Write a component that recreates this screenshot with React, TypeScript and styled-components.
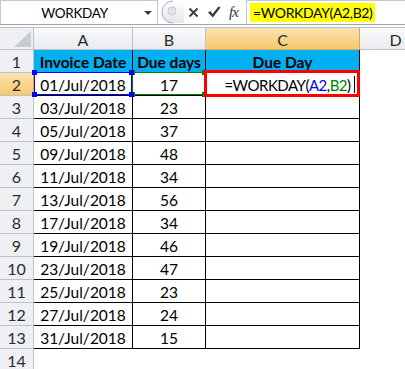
import styled, { createGlobalStyle } from 'styled-components';

const COLOR = {
  TEXT: '#000000',
  HEAD_TEXT: '#2b2b2b',
  HEAD_BG: '#eef0f3',
  HEAD_BORDER: '#bcc2ca',
  HEAD_ACTIVE_TOP: '#fbe3b0',
  HEAD_ACTIVE_BOTTOM: '#f6c86f',
  HEAD_ACTIVE_BORDER: '#e2a446',
  TABLE_BORDER: '#000000',
  TITLE_FILL: '#00b0f0',
  RED: '#ff0000',
  REF_BLUE: '#0000ff',
  REF_GREEN: '#008000',
  HIGHLIGHT: '#ffff00',
  BAR_BORDER: '#c3c8ce',
};

const FONT = `Lato, 'Liberation Sans', sans-serif`;

const GlobalStyle = createGlobalStyle`
  html, body {
    margin: 0;
    padding: 0;
    background: #fff;
  }
  body {
    font-family: ${FONT};
    color: ${COLOR.TEXT};
    overflow: hidden;
  }
`;

const Screen = styled.div`
  width: 405px;
  height: 369px;
  overflow: hidden;
  background: #fff;
`;

/* formula bar */

const FormulaBar = styled.div`
  display: flex;
  align-items: stretch;
  height: 25px;
  box-sizing: border-box;
  border-bottom: 1px solid #9ea4ac;
`;

const NameBox = styled.div`
  display: flex;
  align-items: center;
  width: 158px;
  box-sizing: border-box;
  border: 1px solid ${COLOR.BAR_BORDER};
  border-bottom: none;
`;

const NameText = styled.span`
  flex: 1;
  padding-left: 4px;
  text-align: center;
  font-size: 13.5px;
  letter-spacing: -0.3px;
`;

const DropArrow = styled.span`
  width: 0;
  height: 0;
  margin-right: 5px;
  border-left: 4px solid transparent;
  border-right: 4px solid transparent;
  border-top: 4px solid #3c3c3c;
`;

const BarTools = styled.div`
  display: flex;
  align-items: center;
  width: 88px;
`;

const ToolIcon = styled.svg<{ $gap: number }>`
  flex: none;
  margin-left: ${({ $gap }) => `${$gap}px`};
`;

const FxLabel = styled.span`
  margin-left: 8px;
  font-family: 'Liberation Serif', serif;
  font-style: italic;
  font-size: 15px;
  color: #333;
  letter-spacing: -1px;
`;

const FormulaInput = styled.div`
  flex: 1;
  display: flex;
  align-items: center;
  padding-left: 3px;
  border-left: 1px solid ${COLOR.BAR_BORDER};
  border-top: 1px solid ${COLOR.BAR_BORDER};
`;

const Highlight = styled.span`
  background: ${COLOR.HIGHLIGHT};
  padding: 1px 2px 1px 3px;
  font-size: 14px;
  letter-spacing: -0.35px;
  line-height: 17px;
`;

const BarGap = styled.div`
  height: 2px;
`;

/* sheet */

const Sheet = styled.div`
  display: grid;
  grid-template-columns: 34px 99px 73px 154px 72px;
  grid-auto-rows: 23px;
`;

const HeadBase = styled.div`
  box-sizing: border-box;
  display: flex;
  align-items: center;
  justify-content: center;
  font-size: 16px;
  color: ${COLOR.HEAD_TEXT};
`;

const Corner = styled(HeadBase)`
  align-items: flex-end;
  justify-content: flex-end;
  padding: 0 2px 2px 0;
  background: ${COLOR.HEAD_BG};
  border-top: 1px solid ${COLOR.HEAD_BORDER};
  border-right: 1px solid ${COLOR.HEAD_BORDER};
  border-bottom: 1px solid ${COLOR.HEAD_BORDER};
`;

const ColHead = styled(HeadBase)<{ $active?: boolean }>`
  padding-top: 1px;
  border-top: 1px solid ${COLOR.HEAD_BORDER};
  border-right: 1px solid
    ${({ $active }) => ($active ? COLOR.HEAD_ACTIVE_BORDER : COLOR.HEAD_BORDER)};
  border-bottom: 1px solid
    ${({ $active }) => ($active ? COLOR.HEAD_ACTIVE_BORDER : COLOR.HEAD_BORDER)};
  background: ${({ $active }) =>
    $active
      ? `linear-gradient(${COLOR.HEAD_ACTIVE_TOP}, ${COLOR.HEAD_ACTIVE_BOTTOM})`
      : 'linear-gradient(#f8f9fa, #e9ebee)'};
`;

const RowHead = styled(HeadBase)<{ $active?: boolean }>`
  border-right: 1px solid
    ${({ $active }) => ($active ? COLOR.HEAD_ACTIVE_BORDER : COLOR.HEAD_BORDER)};
  border-bottom: 1px solid ${COLOR.HEAD_BORDER};
  background: ${({ $active }) =>
    $active
      ? `linear-gradient(${COLOR.HEAD_ACTIVE_TOP}, ${COLOR.HEAD_ACTIVE_BOTTOM})`
      : COLOR.HEAD_BG};
`;

const DataCell = styled.div`
  position: relative;
  box-sizing: border-box;
  display: flex;
  align-items: center;
  justify-content: center;
  padding-top: 1px;
  font-size: 15.5px;
  white-space: nowrap;
  border-right: 1px solid ${COLOR.TABLE_BORDER};
  border-bottom: 1px solid ${COLOR.TABLE_BORDER};
`;

const TitleCell = styled(DataCell)`
  background: ${COLOR.TITLE_FILL};
  font-weight: 700;
`;

const BlankCell = styled.div``;

const RangeFrame = styled.span<{ $color: string; $left: number; $layer: number }>`
  position: absolute;
  top: -1px;
  left: ${({ $left }) => `${$left}px`};
  right: 0;
  bottom: 0;
  border: 1px solid ${({ $color }) => $color};
  z-index: ${({ $layer }) => $layer};
`;

const Handle = styled.span<{ $color: string; $x: 'left' | 'right'; $y: 'top' | 'bottom' }>`
  position: absolute;
  width: 5px;
  height: 5px;
  background: ${({ $color }) => $color};
  ${({ $x }) => $x}: -3px;
  ${({ $y }) => $y}: -3px;
`;

const RedFrame = styled.span`
  position: absolute;
  top: -3px;
  left: -2px;
  right: -1px;
  bottom: -2px;
  border: 3px solid ${COLOR.RED};
  z-index: 3;
`;

const EditText = styled.span`
  display: flex;
  align-items: center;
  padding-left: 14px;
  font-size: 15px;
  letter-spacing: -0.5px;
`;

const Ref = styled.span<{ $color: string }>`
  color: ${({ $color }) => $color};
`;

const Caret = styled.span`
  width: 1px;
  height: 17px;
  margin-left: 3px;
  background: #000;
`;

const rows: [string, string][] = [
  ['01/Jul/2018', '17'],
  ['03/Jul/2018', '23'],
  ['05/Jul/2018', '37'],
  ['09/Jul/2018', '48'],
  ['11/Jul/2018', '34'],
  ['13/Jul/2018', '56'],
  ['17/Jul/2018', '34'],
  ['19/Jul/2018', '46'],
  ['23/Jul/2018', '47'],
  ['25/Jul/2018', '23'],
  ['27/Jul/2018', '24'],
  ['31/Jul/2018', '15'],
];

const Frame = ({ color, left, layer }: { color: string; left: number; layer: number }) => (
  <RangeFrame $color={color} $left={left} $layer={layer}>
    <Handle $color={color} $x="left" $y="top" />
    <Handle $color={color} $x="right" $y="top" />
    <Handle $color={color} $x="left" $y="bottom" />
    <Handle $color={color} $x="right" $y="bottom" />
  </RangeFrame>
);

const FormulaBarRow = () => (
  <FormulaBar>
    <NameBox>
      <NameText>WORKDAY</NameText>
      <DropArrow />
    </NameBox>
    <BarTools>
      <ToolIcon $gap={2} width="24" height="24" viewBox="0 0 24 24">
        <defs>
          <linearGradient id="grip" x1="0" y1="0" x2="0" y2="1">
            <stop offset="0" stopColor="#ffffff" />
            <stop offset="1" stopColor="#e3e5e8" />
          </linearGradient>
        </defs>
        <path d="M24 1 H12 A11 11 0 0 0 12 23 H24 Z" fill="url(#grip)" />
        <path d="M13 1 A11 11 0 0 0 13 23" fill="none" stroke="#a9aeb5" strokeWidth="1" />
        <circle cx="12" cy="11" r="4" fill="#e2e4e7" stroke="#c4c7cc" />
      </ToolIcon>
      <ToolIcon $gap={4} width="11" height="11" viewBox="0 0 11 11">
        <path d="M1.5 1.5 L9.5 9.5 M9.5 1.5 L1.5 9.5" stroke="#3f3f3f" strokeWidth="2" />
      </ToolIcon>
      <ToolIcon $gap={8} width="14" height="12" viewBox="0 0 14 12">
        <path d="M1 6.5 L3.5 5 L5.5 8 L11.5 0.5 L13.5 1.5 L5.8 11.5 Z" fill="#3a3a3a" />
      </ToolIcon>
      <FxLabel>fx</FxLabel>
    </BarTools>
    <FormulaInput>
      <Highlight>=WORKDAY(A2,B2)</Highlight>
    </FormulaInput>
  </FormulaBar>
);

export default function App() {
  return (
    <Screen>
      <GlobalStyle />
      <FormulaBarRow />
      <BarGap />
      <Sheet>
        <Corner>
          <svg width="17" height="16" viewBox="0 0 17 16">
            <path d="M17 0 V16 H0 Z" fill="#c8cbd0" />
          </svg>
        </Corner>
        <ColHead>A</ColHead>
        <ColHead>B</ColHead>
        <ColHead $active>C</ColHead>
        <ColHead>D</ColHead>

        <RowHead>1</RowHead>
        <TitleCell>Invoice Date</TitleCell>
        <TitleCell>Due days</TitleCell>
        <TitleCell>Due Day</TitleCell>
        <BlankCell />

        {rows.map(([date, days], i) => {
          const rowNo = i + 2;
          const editing = rowNo === 2;
          return [
            <RowHead key={`h${rowNo}`} $active={editing}>
              {rowNo}
            </RowHead>,
            <DataCell key={`a${rowNo}`}>
              {date}
              {editing && <Frame color={COLOR.REF_BLUE} left={0} layer={2} />}
            </DataCell>,
            <DataCell key={`b${rowNo}`}>
              {days}
              {editing && <Frame color={COLOR.REF_GREEN} left={-1} layer={1} />}
            </DataCell>,
            <DataCell key={`c${rowNo}`}>
              {editing && (
                <>
                  <EditText>
                    =WORKDAY(
                    <Ref $color={COLOR.REF_BLUE}>A2</Ref>,
                    <Ref $color={COLOR.REF_GREEN}>B2</Ref>)
                    <Caret />
                  </EditText>
                  <RedFrame />
                </>
              )}
            </DataCell>,
            <BlankCell key={`d${rowNo}`} />,
          ];
        })}

        <RowHead>14</RowHead>
        <BlankCell />
        <BlankCell />
        <BlankCell />
        <BlankCell />
      </Sheet>
    </Screen>
  );
}
